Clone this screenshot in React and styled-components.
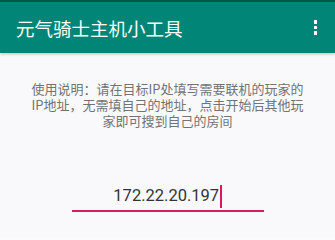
import React from "react";
import styled, { createGlobalStyle } from "styled-components";

const Global = createGlobalStyle`
  html, body { margin: 0; padding: 0; }
  body {
    width: 335px;
    height: 238px;
    overflow: hidden;
    background: #fafafa;
    font-family: Roboto, "Noto Sans CJK SC", sans-serif;
  }
`;

const Screen = styled.div`
  width: 335px;
  height: 238px;
  display: flex;
  flex-direction: column;
  background: #f9f9fb;
`;

const StatusBar = styled.div`
  height: 2px;
  background: #00574b;
`;

const Toolbar = styled.header`
  height: 51px;
  background: #008577;
  display: flex;
  align-items: center;
  justify-content: space-between;
  padding: 0 14px 0 16px;
  box-shadow: 0 1px 3px rgba(0, 0, 0, 0.25);
  position: relative;
  z-index: 1;
`;

const Title = styled.h1`
  margin: 0;
  font-family: "Noto Sans CJK SC", sans-serif;
  font-weight: 400;
  font-size: 18.5px;
  color: #ffffff;
  letter-spacing: 0;
  line-height: 1;
  margin-top: 1px;
`;

const MenuButton = styled.div`
  display: flex;
  flex-direction: column;
  gap: 2px;
  align-items: center;
  padding: 4px;
`;

const Dot = styled.span`
  width: 3.5px;
  height: 3.5px;
  background: #fff;
  border-radius: 0.5px;
`;

const Content = styled.main`
  flex: 1;
  display: flex;
  flex-direction: column;
  align-items: center;
  padding-top: 28px;
`;

const Instructions = styled.p`
  margin: 0;
  font-family: "Noto Sans CJK SC", sans-serif;
  font-size: 13px;
  line-height: 16px;
  color: #737373;
  text-align: center;
  white-space: nowrap;
`;

const InputWrap = styled.div`
  margin-top: 55px;
  width: 192px;
  display: flex;
  justify-content: center;
  align-items: center;
  height: 24px;
  border-bottom: 2px solid #d81b60;
  padding-bottom: 2px;
`;

const InputText = styled.span`
  font-family: Roboto, sans-serif;
  font-size: 16.5px;
  color: #333333;
  line-height: 1;
  display: flex;
  align-items: center;
`;

const Caret = styled.span`
  display: inline-block;
  width: 1.5px;
  height: 23px;
  background: #d81b60;
  margin-left: 1px;
`;

export default function App() {
  return (
    <>
      <Global />
      <Screen>
        <StatusBar />
        <Toolbar>
          <Title>元气骑士主机小工具</Title>
          <MenuButton>
            <Dot />
            <Dot />
            <Dot />
          </MenuButton>
        </Toolbar>
        <Content>
          <Instructions>
            使用说明：请在目标IP处填写需要联机的玩家的
            <br />
            IP地址，无需填自己的地址，点击开始后其他玩
            <br />
            家即可搜到自己的房间
          </Instructions>
          <InputWrap>
            <InputText>
              172.22.20.197
              <Caret />
            </InputText>
          </InputWrap>
        </Content>
      </Screen>
    </>
  );
}
